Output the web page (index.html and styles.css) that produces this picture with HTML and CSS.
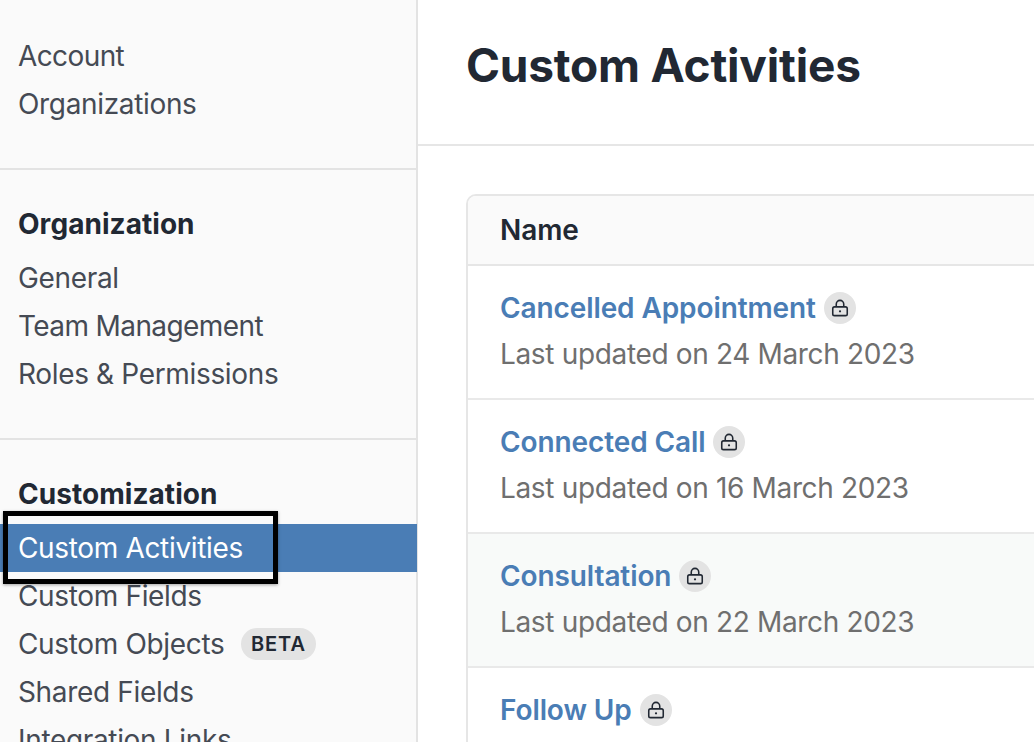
FILE: index.html
```html
<!DOCTYPE html>
<html lang="en">
<head>
<meta charset="utf-8">
<title>Custom Activities</title>
<link rel="stylesheet" href="styles.css">
</head>
<body>
<div class="app">
  <aside class="sidebar">
    <section class="group group-first">
      <a class="item item-tight">Account</a>
      <a class="item">Organizations</a>
    </section>
    <section class="group">
      <h3 class="group-title">Organization</h3>
      <a class="item">General</a>
      <a class="item item-tight">Team Management</a>
      <a class="item">Roles &amp; Permissions</a>
    </section>
    <section class="group group-last">
      <h3 class="group-title">Customization</h3>
      <div class="active-wrap">
        <a class="item item-active">Custom Activities</a>
        <div class="callout"></div>
      </div>
      <a class="item">Custom Fields</a>
      <a class="item">Custom Objects <span class="badge">BETA</span></a>
      <a class="item">Shared Fields</a>
      <a class="item">Integration Links</a>
    </section>
  </aside>
  <main class="main">
    <header class="page-header"><h1 class="page-title">Custom Activities</h1></header>
    <div class="content">
      <div class="card">
        <div class="card-head">Name</div>
        <div class="row">
          <div class="row-title"><a class="link">Cancelled Appointment</a>
            <span class="lock"><svg viewBox="0 -.7 16 16" class="lock-icon"><path d="M5 6.4V4.2a3 3 0 0 1 6 0v2.2"/><rect x="2.2" y="6.4" width="11.6" height="7" rx="1.4"/><circle class="dot" cx="8" cy="9.9" r=".9"/></svg></span></div>
          <div class="row-sub">Last updated on 24 March 2023</div>
        </div>
        <div class="row">
          <div class="row-title"><a class="link">Connected Call</a>
            <span class="lock"><svg viewBox="0 -.7 16 16" class="lock-icon"><path d="M5 6.4V4.2a3 3 0 0 1 6 0v2.2"/><rect x="2.2" y="6.4" width="11.6" height="7" rx="1.4"/><circle class="dot" cx="8" cy="9.9" r=".9"/></svg></span></div>
          <div class="row-sub">Last updated on 16 March 2023</div>
        </div>
        <div class="row row-hover">
          <div class="row-title"><a class="link">Consultation</a>
            <span class="lock"><svg viewBox="0 -.7 16 16" class="lock-icon"><path d="M5 6.4V4.2a3 3 0 0 1 6 0v2.2"/><rect x="2.2" y="6.4" width="11.6" height="7" rx="1.4"/><circle class="dot" cx="8" cy="9.9" r=".9"/></svg></span></div>
          <div class="row-sub">Last updated on 22 March 2023</div>
        </div>
        <div class="row">
          <div class="row-title"><a class="link">Follow Up</a>
            <span class="lock"><svg viewBox="0 -.7 16 16" class="lock-icon"><path d="M5 6.4V4.2a3 3 0 0 1 6 0v2.2"/><rect x="2.2" y="6.4" width="11.6" height="7" rx="1.4"/><circle class="dot" cx="8" cy="9.9" r=".9"/></svg></span></div>
          <div class="row-sub">Last updated on 10 March 2023</div>
        </div>
      </div>
    </div>
  </main>
</div>
</body>
</html>
```

FILE: styles.css
```css
* { box-sizing: border-box; }
html, body { margin: 0; height: 100%; overflow: hidden; }
body { font-family: Inter, "Liberation Sans", sans-serif; background: #fff; color: #212833; }
.app { display: flex; height: 742px; overflow: hidden; }
.sidebar { width: 418px; flex: none; background: #fafafa; border-right: 2px solid #e3e3e3; }
.group { padding: 30px 0 40px; border-bottom: 2px solid #e3e3e3; }
.group-first { padding-top: 32px; }
.group-last { border-bottom: 0; }
.group-title { margin: 0 0 6px; padding-left: 18px; font-size: 28px; line-height: 48px; font-weight: 700; color: #212833; letter-spacing: .05px; }
.item { display: block; padding-left: 18px; font-size: 28px; line-height: 48px; color: #454a54; white-space: nowrap; letter-spacing: -.34px; }
.item-tight { letter-spacing: -.6px; }
.active-wrap { position: relative; margin-right: -1px; }
.item-active { background: #4a7db5; color: #fff; }
.callout { position: absolute; left: 3px; top: -13px; width: 275px; height: 73px; border: 5px solid #000; box-shadow: 0 1px 3px rgba(0,0,0,.35); }
.badge { display: inline-block; margin-left: 9px; padding: 0 10px; height: 32px; line-height: 32px; border-radius: 16px; background: #e3e3e3; color: #212833; font-size: 20px; font-weight: 600; letter-spacing: .9px; vertical-align: 3px; }
.main { flex: 1; min-width: 0; }
.page-header { height: 146px; padding: 32px 48px 0; border-bottom: 2px solid #e6e6e6; }
.page-title { margin: 0; font-size: 46px; line-height: 66px; font-weight: 700; color: #212833; letter-spacing: -.2px; white-space: nowrap; }
.content { padding: 48px 0 0 48px; }
.card { width: 700px; border: 2px solid #e6e6e6; border-radius: 10px 0 0 0; }
.card-head { height: 70px; padding-left: 32px; background: #fafafa; border-bottom: 2px solid #e6e6e6; border-radius: 8px 0 0 0; font-size: 28px; line-height: 68px; font-weight: 600; color: #212833; letter-spacing: -.1px; }
.row { height: 134px; padding: 19px 0 0 32px; border-bottom: 2px solid #e9e9e9; }
.row-hover { background: #f8faf9; }
.row-title { display: flex; align-items: center; gap: 8px; height: 46px; }
.link { font-size: 28px; line-height: 46px; font-weight: 600; color: #4a7db5; letter-spacing: -.1px; }
.lock { display: flex; align-items: center; justify-content: center; width: 32px; height: 32px; border-radius: 50%; background: #e3e3e3; }
.lock-icon { width: 20px; height: 20px; fill: none; stroke: #212833; stroke-width: 1.25; }
.lock-icon .dot { fill: #212833; stroke: none; }
.row-sub { font-size: 28px; line-height: 46px; color: #6f6f6f; letter-spacing: -.34px; }
```
